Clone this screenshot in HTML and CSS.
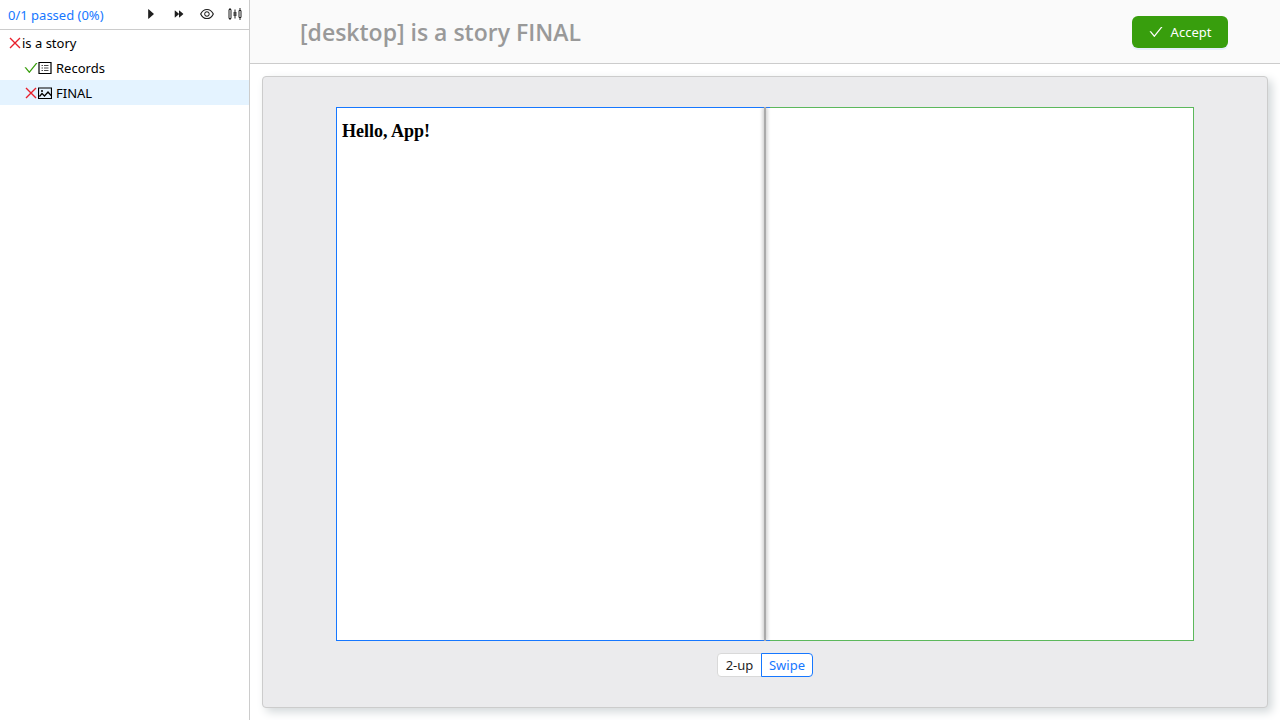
FILE: index.html
```html
<!DOCTYPE html>
<html lang="en">
<head>
<meta charset="utf-8">
<title>is a story FINAL</title>
<link rel="stylesheet" href="styles.css">
</head>
<body>
<svg class="sprite" aria-hidden="true">
  <symbol id="check" viewBox="64 64 896 896"><path d="M912 190h-69.900c-9.800 0-19.100 4.500-25.100 12.200L404.700 724.500 207 474a32 32 0 0 0-25.100-12.200H112c-6.700 0-10.400 7.700-6.300 12.900l273.900 347c12.800 16.200 37.400 16.200 50.300 0l488.400-618.900c4.100-5.100.4-12.800-6.300-12.800z"/></symbol>
  <symbol id="close" viewBox="0 0 14 14"><path d="M2 2l10 10M12 2L2 12" fill="none" stroke="currentColor" stroke-width="1.400"/></symbol>
  <symbol id="play" viewBox="64 64 896 896"><path d="M715.800 493.500L335 165.100c-14.200-12.200-35-1.200-35 18.500v656.800c0 19.700 20.800 30.700 35 18.500l380.800-328.400c10.900-9.400 10.900-27.600 0-37z"/></symbol>
  <symbol id="forward" viewBox="64 64 896 896"><path d="M825.800 498L538.400 249.900c-10.700-9.200-26.400-.9-26.400 14v496.300c0 14.900 15.700 23.200 26.400 14L825.800 526c8.300-7.200 8.300-20.800 0-28zm-320 0L218.400 249.900c-10.700-9.200-26.400-.9-26.400 14v496.300c0 14.900 15.700 23.200 26.400 14L505.800 526c4.100-3.600 6.200-8.800 6.200-14s-2.100-10.400-6.200-14z"/></symbol>
  <symbol id="eye" viewBox="64 64 896 896"><path d="M942.200 486.200C847.400 286.500 704.100 186 512 186c-192.200 0-335.400 100.500-430.200 300.300a60.300 60.300 0 0 0 0 51.500C176.600 737.500 319.900 838 512 838c192.200 0 335.400-100.500 430.200-300.300 7.700-16.200 7.700-35 0-51.500zM512 766c-161.300 0-279.400-81.800-362.700-254C232.600 339.800 350.700 258 512 258s279.400 81.800 362.700 254C791.500 684.200 673.400 766 512 766zm-4-430c-97.200 0-176 78.800-176 176s78.800 176 176 176 176-78.800 176-176-78.800-176-176-176zm0 288c-61.900 0-112-50.100-112-112s50.100-112 112-112 112 50.100 112 112-50.100 112-112 112z"/></symbol>
  <symbol id="sliders" viewBox="0 0 14 14"><path d="M2 1v1.500M2 11.500V13M7 2.500v3M7 8.500v3M12 1v2M12 11v2M1 2.500h2v9H1zM11 3.500h2v7h-2z" fill="none" stroke="currentColor"/><path d="M5.500 5h3v4h-3z" opacity=".8"/></symbol>
  <symbol id="list" viewBox="0 0 14 14"><path d="M1 1.500h12v11H1z" fill="none" stroke="currentColor" stroke-width="1.200"/><path d="M3.500 4.500h1.500M6 4.500h4.500M3.500 7h1.500M6 7h4.500M3.500 9.500h1.500M6 9.500h4.500" fill="none" stroke="currentColor" opacity=".7"/></symbol>
  <symbol id="picture" viewBox="0 0 14 14"><path d="M.5 2h13v10.500H.5zM1.500 10.500l2.500-3L6.500 10l3.500-4 3 3.500" fill="none" stroke="currentColor" stroke-width="1.200"/><circle cx="4" cy="5" r="1"/></symbol>
</svg>
<div class="app">
  <aside class="sidebar">
    <div class="toolbar">
      <a class="summary" href="#">0/1 passed (0%)</a>
      <div class="actions">
        <button class="tool" type="button" aria-label="Run"><svg class="icon small"><use href="#play"/></svg></button>
        <button class="tool" type="button" aria-label="Run all"><svg class="icon small"><use href="#forward"/></svg></button>
        <button class="tool" type="button" aria-label="Preview"><svg class="icon"><use href="#eye"/></svg></button>
        <button class="tool" type="button" aria-label="Settings"><svg class="icon"><use href="#sliders"/></svg></button>
      </div>
    </div>
    <nav class="tree">
      <a class="node" href="#"><svg class="icon fail"><use href="#close"/></svg><span>is a story</span></a>
      <a class="node child" href="#"><svg class="icon pass"><use href="#check"/></svg><svg class="icon"><use href="#list"/></svg><span class="label">Records</span></a>
      <a class="node child selected" href="#"><svg class="icon fail"><use href="#close"/></svg><svg class="icon"><use href="#picture"/></svg><span class="label">FINAL</span></a>
    </nav>
  </aside>
  <main class="main">
    <header class="header">
      <h1 class="title">[desktop] is a story FINAL</h1>
      <button class="accept" type="button"><svg class="icon"><use href="#check"/></svg>Accept</button>
    </header>
    <section class="card">
      <div class="compare">
        <div class="pane actual"><h2 class="hello">Hello, App!</h2></div>
        <div class="pane expected"></div>
        <div class="handle"></div>
      </div>
      <div class="modes">
        <button class="mode" type="button">2-up</button>
        <button class="mode active" type="button">Swipe</button>
      </div>
    </section>
  </main>
</div>
</body>
</html>
```
FILE: styles.css
```css
* { box-sizing: border-box; }
body {
  margin: 0;
  font: 13px/20px "Noto Sans", "Open Sans", sans-serif;
  color: #1f1f1f;
  background: #fff;
}
button { font: inherit; cursor: pointer; }
a { color: inherit; text-decoration: none; }
.sprite { display: none; }
.icon { width: 14px; height: 14px; flex: none; fill: currentColor; }
.small { width: 12px; height: 12px; }
.app { display: flex; min-height: 100vh; }
.sidebar { width: 250px; flex: none; border-right: 1px solid #ccc; }
.toolbar {
  display: flex;
  align-items: center;
  justify-content: space-between;
  height: 30px;
  padding-left: 8px;
  border-bottom: 1px solid #ccc;
}
.summary { color: #1677ff; }
.actions { display: flex; align-self: flex-start; }
.tool {
  display: flex;
  align-items: center;
  justify-content: center;
  width: 28px;
  height: 28px;
  padding: 0;
  border: 0;
  background: none;
  color: #1f1f1f;
}
.node {
  display: flex;
  align-items: center;
  height: 25px;
  padding-left: 8px;
  color: #000;
}
.child { padding-left: 24px; }
.label { margin-left: 4px; }
.selected { background: #e4f3ff; }
.fail { color: #e8202c; }
.pass { color: #389e0d; }
.main { display: flex; flex-direction: column; flex: 1; min-width: 0; }
.header {
  display: flex;
  justify-content: space-between;
  align-items: center;
  height: 64px;
  padding: 0 52px 0 50px;
  background: #fafafa;
  border-bottom: 1px solid #ccc;
}
.title {
  margin: 0;
  font: 600 23px/32px "Open Sans", "Noto Sans", sans-serif;
  color: #999;
}
.accept {
  display: flex;
  align-items: center;
  justify-content: center;
  gap: 8px;
  min-width: 96px;
  height: 32px;
  padding: 0 15px;
  border: 0;
  border-radius: 6px;
  background: #389e0d;
  color: #fff;
  box-shadow: 0 2px 0 #e6f0fb;
}
.card {
  display: flex;
  flex-direction: column;
  align-items: center;
  gap: 12px;
  flex: 1;
  margin: 12px;
  padding: 30px 73px;
  border: 1px solid #ccc;
  border-radius: 4px;
  background: #ebebed;
  box-shadow: 4px 4px 10px #d3d8da;
}
.compare { position: relative; display: flex; flex: 1; width: 100%; }
.pane { flex: 1; background: #fff; }
.actual { padding: 11px 5px; border: 1px solid #1677ff; border-right: 0; }
.expected { border: 1px solid #5cb85c; border-left: 0; }
.hello {
  margin: 0;
  font: bold 18px/24px "Liberation Serif", serif;
  color: #000;
}
.handle {
  position: absolute;
  top: 0;
  bottom: 0;
  left: 50%;
  width: 2px;
  margin-left: -1px;
  background: #aaa;
  box-shadow: 0 0 4px #888;
  clip-path: inset(0 -6px);
}
.modes { display: flex; }
.mode {
  height: 24px;
  padding: 0 7px;
  border: 1px solid #d9d9d9;
  border-radius: 4px 0 0 4px;
  background: #fff;
  color: #1f1f1f;
}
.mode:first-child { min-width: 45px; }
.mode.active {
  min-width: 52px;
  margin-left: -1px;
  border-color: #1677ff;
  border-radius: 0 4px 4px 0;
  color: #1677ff;
}
```
